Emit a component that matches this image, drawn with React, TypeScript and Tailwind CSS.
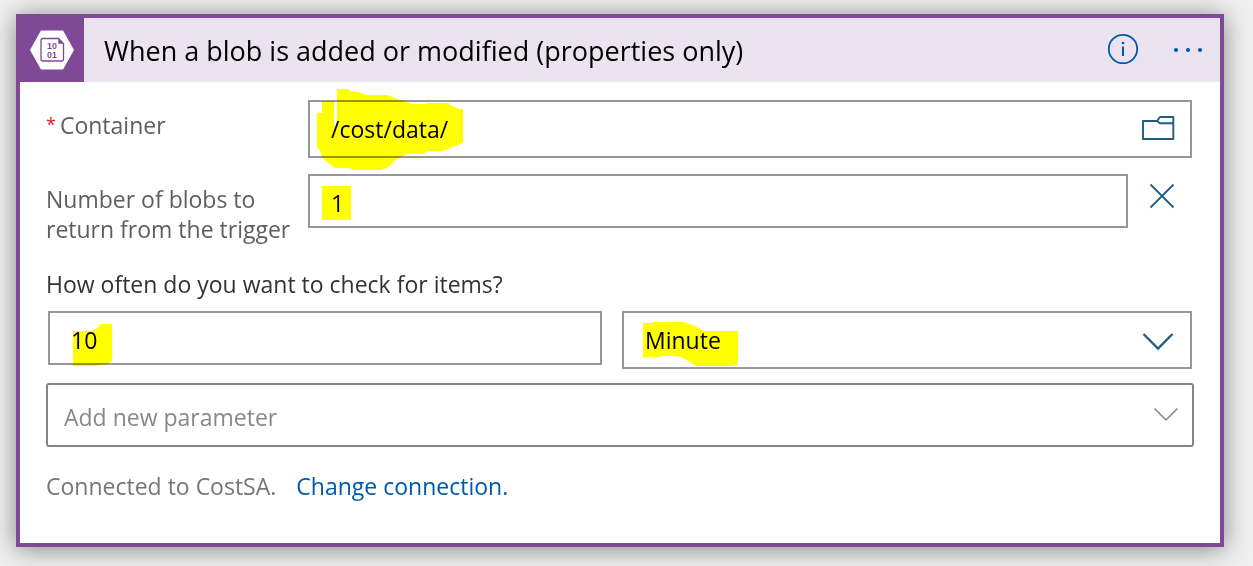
import type { ReactNode } from "react";

const fieldClass =
  "block w-full appearance-none rounded-none border-2 border-[#979797] bg-white px-[21px] text-[23px] text-black outline-none";

function Marker({ width, height, d, className }: { width: number; height: number; d: string; className: string }) {
  return (
    <svg
      aria-hidden="true"
      width={width}
      height={height}
      viewBox={`0 0 ${width} ${height}`}
      className={`pointer-events-none absolute mix-blend-multiply ${className}`}
    >
      <path d={d} fill="#ffff00" />
    </svg>
  );
}

function Field({ className, children }: { className: string; children: ReactNode }) {
  return <div className={`relative ${className}`}>{children}</div>;
}

function BlobIcon() {
  return (
    <svg width="46" height="42" viewBox="0 0 46 42" aria-hidden="true" className="font-['Liberation_Sans',sans-serif]">
      <path d="M12 1.500h22L45 21 34 40.500H12L1 21z" fill="#fff" />
      <path d="M14 9.500h15.500l5 5V30a2 2 0 0 1-2 2H14a2 2 0 0 1-2-2V11.500a2 2 0 0 1 2-2z" fill="#fff" stroke="#804998" strokeWidth="1.300" />
      <path d="M29.300 9.200v5.500h5.500z" fill="#804998" />
      <text x="23" y="20" textAnchor="middle" fontSize="9" fontWeight="700" fill="#804998">10</text>
      <text x="23" y="29" textAnchor="middle" fontSize="9" fontWeight="700" fill="#804998">01</text>
    </svg>
  );
}

export default function App() {
  return (
    <main className="min-h-screen bg-[#f0f0f0] pt-3.5 pr-[29px] pb-[19px] pl-4 font-['Open_Sans','Noto_Sans',sans-serif]">
      <section className="border-4 border-[#804998] bg-white shadow-[0_2px_24px_rgba(0,0,0,0.45)]">
        <header className="flex h-16 items-center bg-[#ebe3f0]">
          <div className="flex h-16 w-16 shrink-0 items-center justify-center bg-[#804998]">
            <BlobIcon />
          </div>
          <h1 className="flex-1 pt-0.5 pl-5 text-[27px] leading-8 text-black">
            When a blob is added or modified (properties only)
          </h1>
          <button type="button" aria-label="Information" className="mr-[33px]">
            <svg width="32" height="34" viewBox="0 0 32 34" fill="none">
              <circle cx="16" cy="16" r="14.200" stroke="#0058ad" strokeWidth="1.800" />
              <path d="M16 13.500V23" stroke="#0058ad" strokeWidth="2" />
              <circle cx="16" cy="10" r="1.300" fill="#0058ad" />
            </svg>
          </button>
          <button type="button" aria-label="More commands" className="mr-4">
            <svg width="32" height="32" viewBox="0 0 32 32" fill="#0058ad">
              <circle cx="4" cy="16" r="2.100" />
              <circle cx="16" cy="16" r="2.100" />
              <circle cx="28" cy="16" r="2.100" />
            </svg>
          </button>
        </header>

        <div className="px-[26px] pt-[18px] pb-[42px] text-[23px] leading-[30px] text-[#605e5c]">
          <div className="flex pr-0.5">
            <label htmlFor="container" className="flex w-[262px] shrink-0 pt-2.5">
              <span className="mr-1 text-lg leading-7 text-[#e81123]">*</span>
              Container
            </label>
            <Field className="flex-1">
              <input id="container" defaultValue="/cost/data/" className={`${fieldClass} h-[58px]`} />
              <Marker
                width={148}
                height={82}
                className="-top-3 left-2"
                d="M21 1H32L34 3 42 4 51 7H71L79 10 96 16H110L111 15H133L134 17 143 21H147V55L126 63H110L109 66H92L82 70 71 80 64 82H37L33 80H19L11 74 6 69 4 62 1 60V25H6V13H18V37L21 38z"
              />
              <button type="button" aria-label="Browse folders" className="absolute top-3 right-[17px]">
                <svg width="34" height="32" viewBox="0 0 34 32" fill="none" stroke="#1f5d85" strokeWidth="1.900" strokeLinejoin="round">
                  <path d="M2 9h14l3-4h13.300v22H2z" />
                  <path d="M16 9l3 2.300h13.300" />
                </svg>
              </button>
            </Field>
          </div>

          <div className="mt-4 flex pr-0.5">
            <label htmlFor="blob-count" className="mt-2.5 h-[60px] w-[262px] shrink-0">
              Number of blobs to
              <br />
              return from the trigger
            </label>
            <Field className="flex-1">
              <input id="blob-count" defaultValue="1" className={`${fieldClass} h-[54px] pt-1`} />
              <Marker width={29} height={34} className="top-3 left-3.5" d="M0 0h29v34H0z" />
            </Field>
            <button type="button" aria-label="Remove parameter" className="flex h-11 w-16 shrink-0 items-center justify-center pl-1">
              <svg width="26" height="26" viewBox="0 0 26 26" stroke="#1f5d85" strokeWidth="1.800">
                <path d="M1.500 1.500l23 23M24.500 1.500l-23 23" />
              </svg>
            </button>
          </div>

          <p id="frequency" className="mt-[25px] text-[#333]">How often do you want to check for items?</p>
          <div className="mt-3 flex gap-5 px-0.5">
            <Field className="w-[554px] shrink">
              <input aria-labelledby="frequency" defaultValue="10" className={`${fieldClass} h-[54px] pt-1`} />
              <Marker width={41} height={44} className="top-3 left-6" d="M1 8h18l7-3 2-4h12v37l-5 3-6 1-9 1H1z" />
            </Field>
            <Field className="min-w-0 flex-1">
              <select aria-label="Interval unit" defaultValue="Minute" className={`${fieldClass} h-[58px]`}>
                <option>Minute</option>
              </select>
              <Marker
                width={95}
                height={45}
                className="top-[11px] left-[21px]"
                d="M0 1h10V0h30l12 4 9 5h19V9h15v34l-8 1H53l-6-4-9-5-6-1H18l-2 1H0z"
              />
              <svg aria-hidden="true" width="32" height="20" viewBox="0 0 32 20" fill="none" className="pointer-events-none absolute top-[21px] right-[18px]">
                <path d="M1.500 2L16 16.500 30.500 2" stroke="#1f5d85" strokeWidth="2.300" />
              </svg>
            </Field>
          </div>

          <Field className="mt-3.5">
            <select
              aria-label="Add new parameter"
              className="block h-16 w-full appearance-none rounded-[3px] border-2 border-[#858585] bg-white px-4 pt-1 text-[23px] text-[#8a8886] outline-none"
            >
              <option>Add new parameter</option>
            </select>
            <svg aria-hidden="true" width="26" height="16" viewBox="0 0 26 16" fill="none" className="pointer-events-none absolute top-6 right-[15px]">
              <path d="M1.500 1.500L13 13 24.500 1.500" stroke="#858585" strokeWidth="1.500" />
            </svg>
          </Field>

          <p className="mt-6 flex flex-wrap gap-x-5 text-[#767676]">
            <span>Connected to CostSA.</span>
            <a href="#change-connection" className="text-[#0058ad]">Change connection.</a>
          </p>
        </div>
      </section>
    </main>
  );
}
